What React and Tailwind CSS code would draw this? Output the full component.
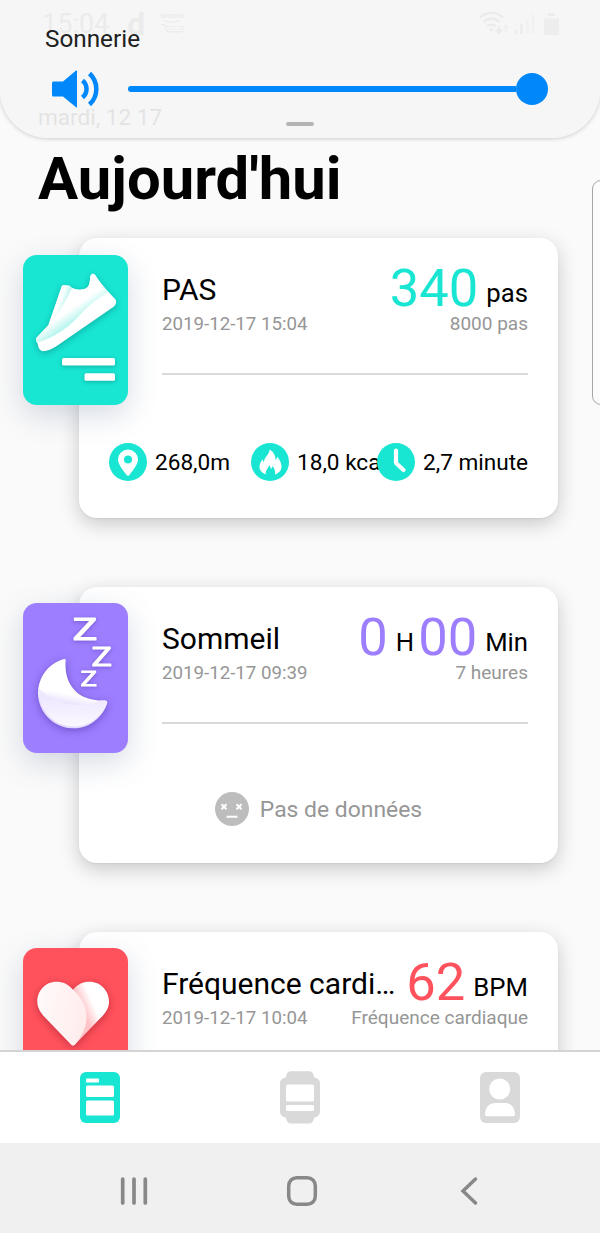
import React from "react";

const StatusBar = () => (
    <div className="flex h-12 items-center justify-between pl-[42px] pr-[41px] text-[#b4b4b4]">
        <div className="flex items-center">
            <span className="text-[27px] leading-12">15:04</span>
            <span className="ml-[18px] text-[32px] font-bold leading-12">d</span>
            <div className="ml-[15px] flex w-6 flex-col items-center pb-0.5">
                <span className="text-[6.5px] font-bold leading-[7px]">amazon</span>
                <svg width="24" height="14" viewBox="0 0 24 14" fill="none" stroke="currentColor" strokeWidth="1.2">
                    <path d="M4 .7q7 3.500 15 0" />
                    <path d="M1 4.500h3.500L7.500 12h14" />
                    <path d="M6 6.500h17v5H8M8 9h15" strokeDasharray="2 1" />
                </svg>
            </div>
        </div>
        <svg width="80" height="24" viewBox="0 0 80 24" fill="none" stroke="currentColor" strokeWidth="2.300">
            <path d="M1 5.500a16.500 16.500 0 0 1 23 0M4.500 10a11.500 11.500 0 0 1 16 0M8 14.500a6.500 6.500 0 0 1 9 0" />
            <circle cx="12.500" cy="17.500" r="1.700" fill="currentColor" stroke="none" />
            <path d="M20 14v6M17 17.500l3 3 3-3" />
            <path d="M27 20v-6M24.500 16l2.500-2.500 2.500 2.500" opacity=".5" />
            <path d="M37 22v-4M42.500 22V12" />
            <path d="M48.500 22V7M54 22V2" opacity=".4" />
            <path d="M65 6.500h15V23H65zM69 1h7v3h-7z" fill="currentColor" stroke="none" opacity=".8" />
        </svg>
    </div>
);

const VolumePanel = () => (
    <div className="absolute inset-x-0 top-0 h-[138px] rounded-b-[48px] bg-[#f5f5f5]/85 pt-6 shadow-[0_1px_4px_rgba(0,0,0,0.18)]">
        <p className="pl-[45px] text-[24.3px] leading-[30px] text-[#202020]">Sonnerie</p>
        <div className="mt-4 flex h-[38px] items-center pl-[52px]">
            <svg width="48" height="38" viewBox="0 0 48 38" fill="none" stroke="#0088fb" strokeWidth="4.500">
                <path d="M1.500 11.500H11L24 .6Q25 0 25 1v36q0 1-1 .3L11 26.500H1.500Q0 26.500 0 25V13q0-1.500 1.500-1.500Z" fill="#0088fb" stroke="none" />
                <path d="M30.500 10.500a11 11 0 0 1 0 17M37.500 3.500a21 21 0 0 1 0 31" />
            </svg>
            <div className="ml-[28px] flex w-[420px] items-center">
                <div className="h-1.5 flex-1 rounded-l-full bg-[#0088fb]"></div>
                <div className="h-8 w-8 rounded-full bg-[#0088fb]"></div>
            </div>
        </div>
        <div className="mx-auto mt-[14px] h-1 w-7 rounded-full bg-[#b4b4b4]"></div>
    </div>
);

const ShoeIcon = () => (
    <svg width="105" height="150" viewBox="0 0 105 150">
        <defs>
            <linearGradient id="upper" x1="40" y1="44" x2="56" y2="67" gradientUnits="userSpaceOnUse">
                <stop offset=".45" stopColor="#fff" />
                <stop offset="1" stopColor="#a5f3eb" />
            </linearGradient>
            <linearGradient id="tongue" x1="34" y1="46" x2="42" y2="49" gradientUnits="userSpaceOnUse">
                <stop offset=".3" stopColor="#fff" />
                <stop offset="1" stopColor="#c5f6f1" />
            </linearGradient>
        </defs>
        <g className="drop-shadow-[0_2px_3px_rgba(0,90,90,0.35)]">
            <path d="M38.700 31.500Q39.300 30 41 30.200L46.500 30.800Q50 34.500 56 34.700Q63.500 34.800 65.500 31Q67 28 67 24.500Q67 20 69.500 18.800Q71 18.500 72.500 20.500Q77 28 85.500 37L92.500 44.500Q94.500 48 91 51.500L33 91.500Q27 95.700 20 96.300Q15.500 95.500 14.500 88.500Q12.200 85 13.300 83L25.500 70Z" fill="#fff" />
            <path d="M48.500 33Q52 35 56 34.700Q63.500 34.800 65.500 31Q67 28 67 24.500Q67 20 69.500 18.800Q71 18.500 72.500 20.500Q77 28 85.300 37C72 45 63 53 55 62C47 71 30 84 14 87.500Q12.500 85 13.300 83L25.500 70Q32 65 48.500 33Z" fill="url(#upper)" />
            <path d="M38.700 31.500Q39.300 30 41 30.200L46.500 30.800L49 33Q38 57 25.500 70Z" fill="url(#tongue)" />
        </g>
        <g className="drop-shadow-[0_1px_2px_rgba(0,90,90,0.4)]" fill="#fff">
            <rect x="39" y="103" width="53" height="7.500" rx="1.500" />
            <rect x="61.500" y="118.300" width="30.500" height="7.500" rx="1.500" />
        </g>
    </svg>
);

const MoonIcon = () => (
    <svg width="105" height="150" viewBox="0 0 105 150">
        <defs>
            <linearGradient id="moon" x1="40" y1="70" x2="34" y2="102" gradientUnits="userSpaceOnUse">
                <stop offset=".6" stopColor="#fff" />
                <stop offset="1" stopColor="#e4dafd" />
            </linearGradient>
            <linearGradient id="moonBase" x1="0" y1="95" x2="0" y2="125" gradientUnits="userSpaceOnUse">
                <stop offset="0" stopColor="#eee8ff" />
                <stop offset="1" stopColor="#fbf9ff" />
            </linearGradient>
        </defs>
        <g className="drop-shadow-[0_2px_4px_rgba(60,30,140,0.45)]">
            <path d="M41 56Q43 55.500 42.600 58C41 81 54 98.500 82 97.500Q85 97.500 84 100.500A35.300 35.300 0 1 1 41 56Z" fill="url(#moon)" />
            <path d="M15.700 85.500C31 100 52 107 77 97.700L82 97.500Q85 97.500 84 100.500A35.300 35.300 0 0 1 15.700 85.500Z" fill="url(#moonBase)" />
        </g>
        <g className="font-['Roboto'] drop-shadow-[0_1px_2px_rgba(60,30,140,0.4)]" fill="#fff" stroke="#fff" strokeWidth="1" strokeLinejoin="round">
            <text x="49.500" y="36.500" fontSize="31" textLength="25" lengthAdjust="spacingAndGlyphs">Z</text>
            <text x="68.500" y="62.500" fontSize="25" textLength="20.500" lengthAdjust="spacingAndGlyphs">Z</text>
            <text x="57.500" y="83.300" fontSize="20" textLength="16.500" lengthAdjust="spacingAndGlyphs">Z</text>
        </g>
    </svg>
);

const HeartIcon = () => (
    <svg width="105" height="150" viewBox="0 0 105 150">
        <defs>
            <linearGradient id="heartRight" x1="60" y1="62" x2="71" y2="57" gradientUnits="userSpaceOnUse">
                <stop offset="0" stopColor="#ffc4c8" />
                <stop offset="1" stopColor="#fff" />
            </linearGradient>
            <linearGradient id="heartLeft" x1="15" y1="60" x2="64" y2="70" gradientUnits="userSpaceOnUse">
                <stop offset="0" stopColor="#fff9f9" />
                <stop offset="1" stopColor="#ffeced" />
            </linearGradient>
        </defs>
        <g className="drop-shadow-[0_2px_4px_rgba(120,0,20,0.4)]">
            <path d="M50 41.700C55 36 60 33.700 66.500 33.700C78 33.700 86 43 86 53.500C86 60 83 64.500 78 69.500L52 96.500Q50 98.500 48 96.500Z" fill="url(#heartRight)" />
            <path d="M50 41.700C45 36 40 33.700 33.500 33.700C22 33.700 14.300 43 14.300 53.500C14.300 60 17.500 64.500 22 69.500L48 96.500Q50 98.500 52 96.500C70 75 65 55 50 41.700Z" fill="url(#heartLeft)" />
        </g>
    </svg>
);

const PinIcon = () => (
    <svg className="shrink-0" width="38" height="38" viewBox="0 0 38 38">
        <circle cx="19" cy="19" r="19" fill="#18e5d2" />
        <path d="M19 6.500a10 10 0 0 1 10 10c0 5-5 10.500-8.500 15.500q-1.500 1.600-3 0C14 27 9 21.500 9 16.500a10 10 0 0 1 10-10Zm0 6a4 4 0 1 0 0 8 4 4 0 0 0 0-8Z" fill="#fff" />
    </svg>
);

const FireIcon = () => (
    <svg className="shrink-0" width="38" height="38" viewBox="0 0 38 38">
        <circle cx="19" cy="19" r="19" fill="#18e5d2" />
        <path d="M18.500 6.500c4 2 6 5.500 6 10.500 1-1 1.500-2 1.500-3.500 3 3.500 4.500 7 4.500 10 0 4-2.500 6.500-6.500 8 .5-3.500-.5-6-2.500-8.500-.3 1.500-.8 2.300-1.700 3-.3-2-.8-3-1.800-4-.2 3.500-4 5-3.200 9.300-4-1.200-6.300-4-6.300-7.800 0-2.500 1.500-5 3-7.500.2 1.500.7 2.300 1.500 3 .3-5.500 5.500-7 5.500-12.500Z" fill="#fff" />
    </svg>
);

const ClockIcon = () => (
    <svg className="shrink-0" width="38" height="38" viewBox="0 0 38 38">
        <circle cx="19" cy="19" r="19" fill="#18e5d2" />
        <path d="M19 7.500V20l7.500 7" fill="none" stroke="#fff" strokeWidth="4.200" strokeLinecap="round" strokeLinejoin="round" />
    </svg>
);

const Tile = ({ color, children }) => (
    <div className={`absolute -left-14 h-[150px] w-[105px] rounded-[14px] shadow-[0_10px_30px_rgba(70,90,130,0.22)] ${color}`}>
        {children}
    </div>
);

const Card = ({ title, date, goal, value, tile, color, size, children }) => (
    <section className={`relative ml-[79px] w-[479px] shrink-0 rounded-[18px] bg-white pt-6 shadow-[0_6px_20px_rgba(0,0,0,0.2),0_1px_2px_rgba(0,0,0,0.06)] ${size}`}>
        <Tile color={color}>{tile}</Tile>
        <div className="pl-[83px] pr-[30px]">
            <div className="flex h-[52px] items-end justify-between">
                <h2 className="max-w-[238px] truncate pb-1.5 text-[30px] leading-9 text-black">{title}</h2>
                <div className="flex items-end">{value}</div>
            </div>
            <div className="-mt-0.5 flex justify-between leading-6 text-[#969696]">
                <span className="text-[18.7px]">{date}</span>
                <span className="text-[19px]">{goal}</span>
            </div>
            <div className="mt-[37px] h-[2px] bg-[#d9d9d9]"></div>
        </div>
        {children}
    </section>
);

const Unit = ({ children }) => (
    <span className="whitespace-pre pb-[5px] text-[25.7px] leading-8 text-black">{children}</span>
);

const Stat = ({ icon, label, width }) => (
    <div className={`flex shrink-0 items-center gap-2 whitespace-nowrap ${width}`}>
        {icon}
        <span className="pt-0.5">{label}</span>
    </div>
);

const TabBar = () => (
    <nav className="grid h-[93px] shrink-0 grid-cols-3 justify-items-center border-t-2 border-[#d4d4d4] bg-white pt-[19px]">
        <svg width="40" height="53" viewBox="0 0 40 53">
            <rect y="1" width="40" height="51" rx="6" fill="#18e5d2" />
            <g fill="#fff">
                <rect x="6" y="7.500" width="13" height="4" rx=".8" />
                <rect x="6" y="14.500" width="28" height="11.500" rx="1.500" />
                <rect x="6" y="29.500" width="28" height="15" rx="1.500" />
            </g>
        </svg>
        <svg width="40" height="53" viewBox="0 0 40 53">
            <path d="M11 .3h18c3 0 4.500 2 5.200 6.200C38 7 40 9 40 13v27c0 4-2 6-5.800 6.500C33.500 50.500 32 52.500 29 52.500H11c-3 0-4.500-2-5.200-6C2 46 0 44 0 40V13C0 9 2 7 5.800 6.500 6.500 2.300 8 .3 11 .3Z" fill="#d9d9d9" />
            <g fill="#fff">
                <rect x="6" y="13.500" width="28" height="17" rx="1.500" />
                <rect x="6" y="34" width="28" height="6" rx="1.500" />
            </g>
        </svg>
        <svg width="40" height="53" viewBox="0 0 40 53">
            <rect y="1" width="40" height="51" rx="6" fill="#d9d9d9" />
            <circle cx="19.700" cy="18" r="10.500" fill="#fff" />
            <path d="M5 43.500C5.500 36 9 32 15.500 32h9C31 32 34.500 36 35 43.500q0 1.700-1.500 1.700h-27Q5 45.200 5 43.500Z" fill="#fff" />
        </svg>
    </nav>
);

const SystemBar = () => (
    <div className="flex h-[90px] shrink-0 items-center justify-between bg-[#f0f0f0] pl-[120px] pr-[121px] pt-[5px]">
        <svg width="28" height="32" viewBox="0 0 28 32" stroke="#888" strokeWidth="3.700" strokeLinecap="round">
            <path d="M2.700 4v24M14 4v24M25.300 4v24" />
        </svg>
        <svg className="-ml-1" width="32" height="32" viewBox="0 0 32 32" fill="none" stroke="#888" strokeWidth="3.500">
            <rect x="2.700" y="2.700" width="26.600" height="26.600" rx="8" />
        </svg>
        <svg width="20" height="32" viewBox="0 0 20 32" fill="none" stroke="#888" strokeWidth="3.500" strokeLinecap="round">
            <path d="M16.500 4 4 16l12.500 12" />
        </svg>
    </div>
);

const App = () => {
    return (
        <div className="relative flex h-[1233px] w-[600px] flex-col overflow-hidden bg-[#fafafa] font-['Roboto',sans-serif]">
            <main className="flex min-h-0 flex-1 flex-col overflow-hidden">
                <StatusBar />
                <p className="mt-[56px] pl-[38px] text-[22.6px] leading-7 text-[#808080]">mardi, 12 17</p>
                <h1 className="mt-3 pl-[38px] text-[59.8px] font-bold leading-[70px] text-black">Aujourd'hui</h1>
                <div className="mt-6 flex flex-col">
                    <Card
                        title="PAS"
                        date="2019-12-17 15:04"
                        goal="8000 pas"
                        color="top-[17px] bg-[#18e5d2]"
                        size="h-[280px]"
                        tile={<ShoeIcon />}
                        value={<>
                            <span className="mr-2 text-[52.5px] leading-[52px] text-[#18e5d2]">340</span>
                            <Unit>pas</Unit>
                        </>}
                    >
                        <div className="mt-[68px] flex pl-[30px] text-[22.6px] text-black">
                            <Stat icon={<PinIcon />} label="268,0m" width="w-[142px]" />
                            <Stat icon={<FireIcon />} label="18,0 kcal" width="w-[126px]" />
                            <Stat icon={<ClockIcon />} label="2,7 minute" width="w-[151px]" />
                        </div>
                    </Card>
                    <Card
                        title="Sommeil"
                        date="2019-12-17 09:39"
                        goal="7 heures"
                        color="top-4 bg-[#9c7eff]"
                        size="mt-[69px] h-[276px]"
                        tile={<MoonIcon />}
                        value={<>
                            <span className="mr-2 text-[52.5px] leading-[52px] text-[#9c7eff]">0</span>
                            <Unit>H</Unit>
                            <span className="ml-1 mr-2 text-[52.5px] leading-[52px] text-[#9c7eff]">00</span>
                            <Unit>Min</Unit>
                        </>}
                    >
                        <div className="mt-[67px] flex items-center justify-center gap-[11px] text-[22.9px] leading-[34px] text-[#969696]">
                            <svg width="34" height="34" viewBox="0 0 34 34" fill="none" stroke="#fff" strokeWidth="2">
                                <circle cx="17" cy="17" r="17" fill="#bdbdbd" stroke="none" />
                                <path d="m6.500 12.200 5 5m0-5-5 5M21.500 12.200l5 5m0-5-5 5M11.500 24.800h11" />
                            </svg>
                            <span className="pt-0.5">Pas de données</span>
                        </div>
                    </Card>
                    <Card
                        title="Fréquence cardiaque"
                        date="2019-12-17 10:04"
                        goal="Fréquence cardiaque"
                        color="top-4 bg-[#ff525d]"
                        size="mt-[69px] h-[280px]"
                        tile={<HeartIcon />}
                        value={<>
                            <span className="mr-2 text-[52.5px] leading-[52px] text-[#ff525d]">62</span>
                            <Unit>BPM</Unit>
                        </>}
                    />
                </div>
            </main>
            <TabBar />
            <SystemBar />
            <VolumePanel />
            {/* edge panel handle, runs off the right side */}
            <div className="absolute -right-3 top-[180px] h-[225px] w-5 rounded-[9px] border border-[#a6a6a6] bg-[#fcfcfc]"></div>
        </div>
    );
}

export default App;
